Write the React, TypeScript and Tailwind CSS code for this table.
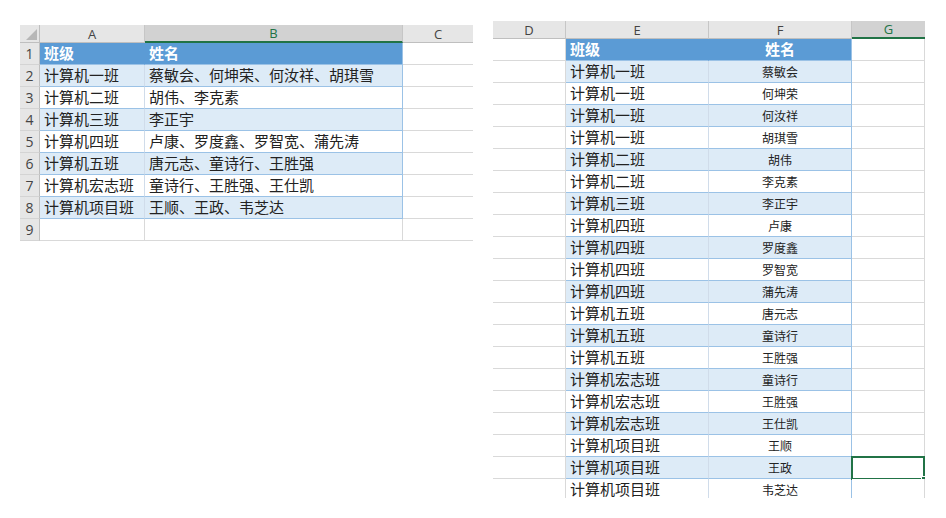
import React from "react";

const CJK = { fontFamily: '"Noto Sans CJK SC", "Microsoft YaHei", sans-serif' };
const LAT = { fontFamily: '"Open Sans", "Liberation Sans", Arial, sans-serif' };

const leftRows: [string, string][] = [
  ["计算机一班", "蔡敏会、何坤荣、何汝祥、胡琪雪"],
  ["计算机二班", "胡伟、李克素"],
  ["计算机三班", "李正宇"],
  ["计算机四班", "卢康、罗度鑫、罗智宽、蒲先涛"],
  ["计算机五班", "唐元志、童诗行、王胜强"],
  ["计算机宏志班", "童诗行、王胜强、王仕凯"],
  ["计算机项目班", "王顺、王政、韦芝达"],
];

const rightRows: [string, string][] = [
  ["计算机一班", "蔡敏会"],
  ["计算机一班", "何坤荣"],
  ["计算机一班", "何汝祥"],
  ["计算机一班", "胡琪雪"],
  ["计算机二班", "胡伟"],
  ["计算机二班", "李克素"],
  ["计算机三班", "李正宇"],
  ["计算机四班", "卢康"],
  ["计算机四班", "罗度鑫"],
  ["计算机四班", "罗智宽"],
  ["计算机四班", "蒲先涛"],
  ["计算机五班", "唐元志"],
  ["计算机五班", "童诗行"],
  ["计算机五班", "王胜强"],
  ["计算机宏志班", "童诗行"],
  ["计算机宏志班", "王胜强"],
  ["计算机宏志班", "王仕凯"],
  ["计算机项目班", "王顺"],
  ["计算机项目班", "王政"],
  ["计算机项目班", "韦芝达"],
];

function ColHead({ label, selected, last }: { label: string; selected?: boolean; last?: boolean }) {
  return (
    <div
      className={
        "flex items-center justify-center h-[18px] text-[13px] leading-[16px] " +
        (selected
          ? "bg-[#d2d2d2] text-[#217346] border-b-2 border-b-[#217346] "
          : "bg-[#e6e6e6] text-[#444444] border-b border-b-[#bfbfbf] ") +
        (last ? "" : "border-r border-r-[#c6c6c6]")
      }
      style={LAT}
    >
      {label}
    </div>
  );
}

function LeftSheet() {
  return (
    <div className="grid grid-cols-[20px_105px_258px_70px] w-[453px]">
      <div className="relative h-[18px] bg-[#e6e6e6] border-r border-r-[#bfbfbf] border-b border-b-[#bfbfbf]">
        <div className="absolute right-[2px] bottom-[2px] w-0 h-0 border-l-[11px] border-l-transparent border-b-[11px] border-b-[#b7b7b7]" />
      </div>
      <ColHead label="A" />
      <ColHead label="B" selected />
      <ColHead label="C" last />
      {Array.from({ length: 9 }).map((_, i) => {
        const r = i === 0 ? ["班级", "姓名"] : leftRows[i - 1];
        const isHead = i === 0;
        const inTable = i <= 7;
        const band = !isHead && inTable && i % 2 === 1;
        const bg = isHead ? "bg-[#5b9bd5]" : band ? "bg-[#ddebf7]" : "bg-white";
        const rowBorder = inTable ? "border-b-[#9bc2e6]" : "border-b-[#d9d9d9]";
        const txt = isHead ? "text-white font-bold" : "text-[#222222]";
        return (
          <React.Fragment key={i}>
            <div
              className="h-[22px] flex items-center justify-center bg-[#e6e6e6] text-[#444444] text-[14px] border-r border-r-[#bfbfbf] border-b border-b-[#d4d4d4]"
              style={LAT}
            >
              {i + 1}
            </div>
            <div
              className={`h-[22px] flex items-center pl-[4px] text-[15px] whitespace-nowrap overflow-hidden ${bg} ${txt} border-b ${rowBorder} border-r ${isHead ? "border-r-[#5b9bd5]" : inTable ? "border-r-[#d0dcea]" : "border-r-[#d9d9d9]"}`}
              style={CJK}
            >
              {r ? r[0] : ""}
            </div>
            <div
              className={`h-[22px] flex items-center pl-[4px] text-[15px] whitespace-nowrap overflow-hidden ${bg} ${txt} border-b ${rowBorder} border-r ${inTable ? "border-r-[#9bc2e6]" : "border-r-[#d9d9d9]"}`}
              style={CJK}
            >
              {r ? r[1] : ""}
            </div>
            <div className="h-[22px] bg-white border-b border-b-[#d9d9d9]" />
          </React.Fragment>
        );
      })}
    </div>
  );
}

function RightSheet() {
  return (
    <div className="h-[477px] overflow-hidden">
      <div className="grid grid-cols-[73px_143px_143px_73px] w-[432px]">
        <ColHead label="D" />
        <ColHead label="E" />
        <ColHead label="F" />
        <ColHead label="G" selected last />
        {Array.from({ length: 21 }).map((_, i) => {
          const isHead = i === 0;
          const r = isHead ? ["班级", "姓名"] : rightRows[i - 1];
          const band = !isHead && i % 2 === 1;
          const bg = isHead ? "bg-[#5b9bd5]" : band ? "bg-[#ddebf7]" : "bg-white";
          const selected = i === 19;
          return (
            <React.Fragment key={i}>
              <div className="h-[22px] bg-white border-r border-r-[#d9d9d9] border-b border-b-[#d9d9d9]" />
              <div
                className={`h-[22px] flex items-center pl-[4px] whitespace-nowrap ${bg} border-b border-b-[#9bc2e6] border-r ${isHead ? "border-r-[#5b9bd5] text-white font-bold text-[15px]" : "border-r-[#d0dcea] text-[#222222] text-[15px]"}`}
                style={CJK}
              >
                {r[0]}
              </div>
              <div
                className={`h-[22px] flex items-center justify-center whitespace-nowrap ${bg} border-b border-b-[#9bc2e6] border-r border-r-[#9bc2e6] ${isHead ? "text-white font-bold text-[15px]" : "text-[#222222] text-[12px]"}`}
                style={CJK}
              >
                {r[1]}
              </div>
              <div className="relative h-[22px] bg-white border-b border-b-[#d9d9d9] border-r border-r-[#d9d9d9]">
                {selected && (
                  <div className="absolute -left-[1px] -top-[1px] w-[74px] h-[24px] border-2 border-[#217346]">
                    <div className="absolute -right-[4px] -bottom-[4px] w-[6px] h-[6px] bg-[#217346] border border-white" />
                  </div>
                )}
              </div>
            </React.Fragment>
          );
        })}
      </div>
    </div>
  );
}

export default function App() {
  return (
    <div className="w-[946px] h-[518px] bg-white relative overflow-hidden flex">
      <div className="pl-[20px] pt-[25px]">
        <LeftSheet />
      </div>
      <div className="pl-[20px] pt-[21px]">
        <RightSheet />
      </div>
    </div>
  );
}
